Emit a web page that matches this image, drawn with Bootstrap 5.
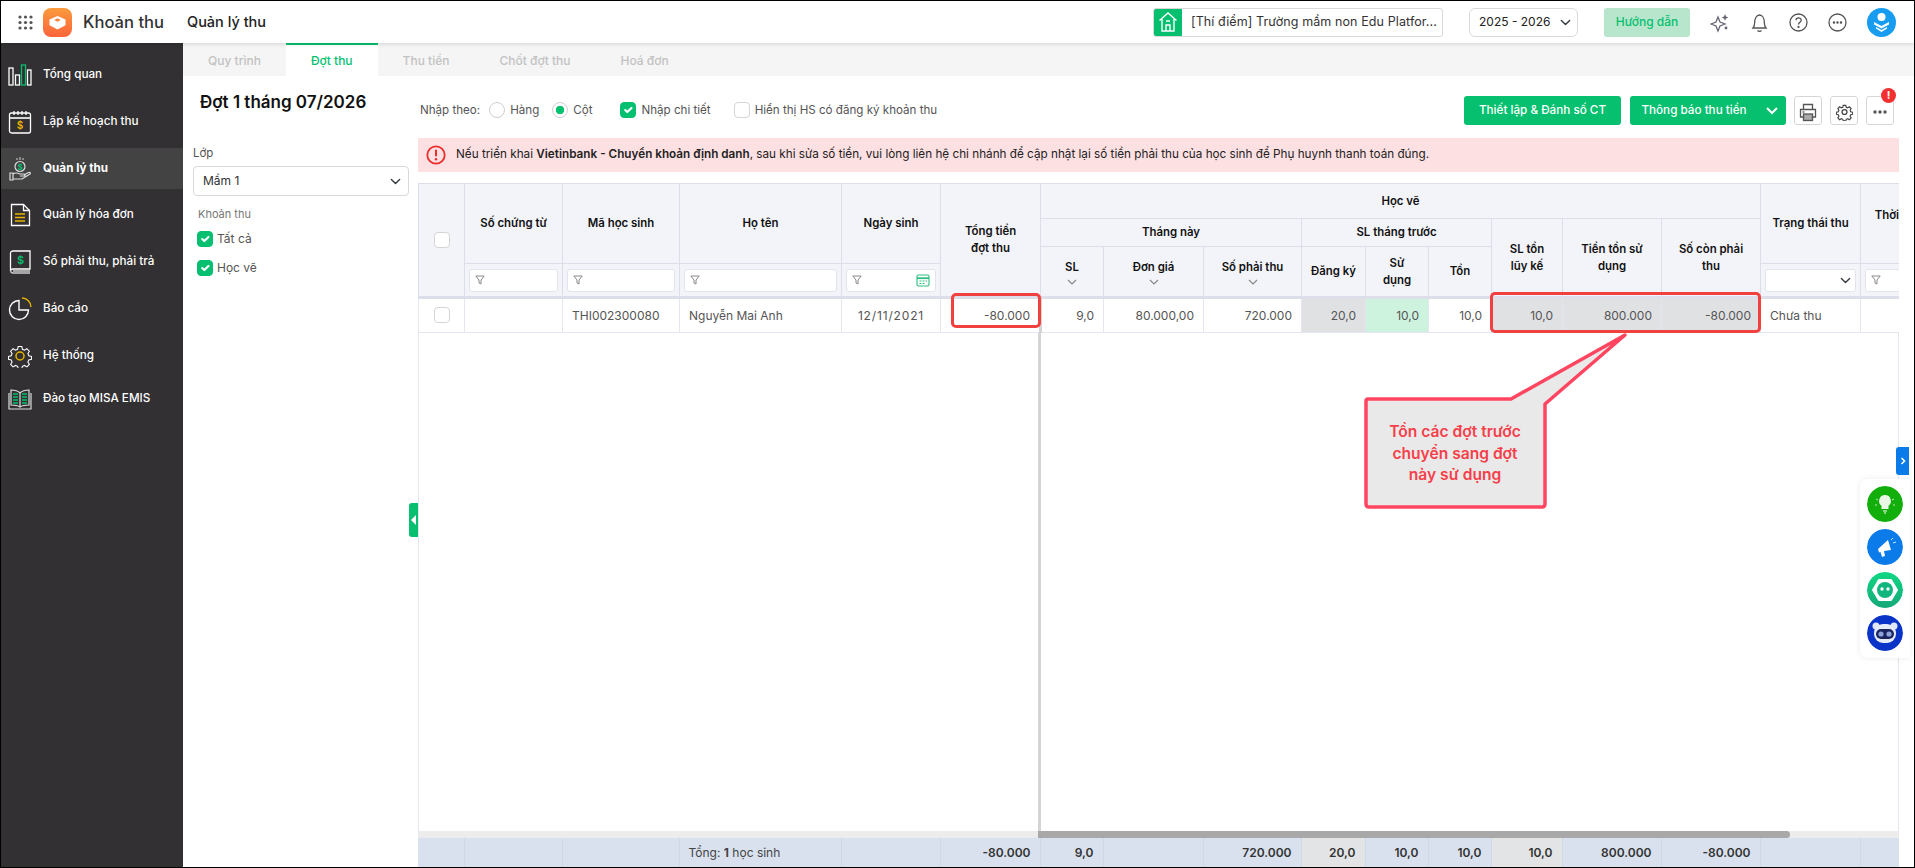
<!DOCTYPE html>
<html lang="vi">
<head>
    <meta charset="UTF-8">
    <title>Khoản thu - Quản lý thu</title>
    <link href="https://cdn.jsdelivr.net/npm/bootstrap@5.3.0/dist/css/bootstrap.min.css" rel="stylesheet">
    <style>
        html, body { height: 100%; overflow: hidden; }
        body { font-family: Inter, "Noto Sans", sans-serif; font-size: 12px; color: #222; background: #fff; }
        .app-frame { height: 868px; border: 1px solid #000; position: relative; overflow: hidden; }

        /* top bar */
        .top-bar { height: 42px; background: #fff; box-shadow: 0 1px 4px rgba(0,0,0,.14); position: relative; z-index: 3; padding-right: 18px; }
        .app-grid { margin-left: 17px; margin-right: 10px; }
        .app-name { font-size: 16.6px; font-weight: 500; color: #333; margin-left: 11px; width: 104px; }
        .page-name { font-size: 14.5px; font-weight: 500; color: #222; }
        .school-pick { width: 290px; height: 29px; border: 1px solid #d9d9d9; border-radius: 3px; overflow: hidden; font-size: 12.5px; color: #333; margin-right: 26px; }
        .school-icon { width: 28px; background: #06bf6f; }
        .school-text { padding-left: 9px; letter-spacing: .1px; white-space: nowrap; }
        .year-pick { width: 109px; height: 29px; font-size: 12px; padding: 0 0 0 9px; border-color: #d9d9d9; color: #222; margin-right: 26px; background-position: right 6px center; background-size: 11px; }
        .guide-btn { width: 86px; height: 29px; background: #b8e6cd; color: #06bf6f; border: 0; font-size: 12px; font-weight: 500; padding: 0; margin-right: 20px; border-radius: 3px; }
        .top-tools { gap: 18px; }
        .top-icon { width: 21px; height: 21px; display: block; }
        .user-dot { width: 29px; height: 29px; border-radius: 50%; background: #189cf0; margin-left: 1px; }

        /* sidebar */
        .side-nav { width: 182px; background: #323032; padding-top: 11.5px; gap: 5.75px; flex-shrink: 0; }
        .side-item { height: 41px; padding-left: 7px; gap: 11px; color: #fff; font-size: 11.7px; font-weight: 500; white-space: nowrap; }
        .side-item.on { background: #434343; font-weight: 700; }
        .side-item svg { width: 24px; height: 24px; flex-shrink: 0; }
        .side-last { margin-top: -3px; }

        /* tabs */
        .tab-strip { height: 33px; background: #f5f5f5; }
        .tab-link { padding: 0 25px; line-height: 31px; font-size: 12px; font-weight: 500; color: #c2c2c2; border-top: 2px solid transparent; white-space: nowrap; }
        .tab-link.on { background: #fff; color: #06bf6f; border-top-color: #06bf6f; }

        /* left filter panel */
        .filter-side { width: 235px; flex-shrink: 0; padding: 16px 9px 0 10px; position: relative; }
        .batch-title { font-size: 17px; font-weight: 600; color: #111; margin: 0 0 0 7px; line-height: 20px; }
        .class-label { margin-top: 33px; margin-bottom: 5px; color: #555; font-size: 11.5px; line-height: 16px; }
        .class-pick { height: 30px; font-size: 12px; padding: 0 0 0 9px; border-color: #d9d9d9; color: #333; border-radius: 4px; background-position: right 7px center; background-size: 11px; }
        .fee-label { margin: 10px 0 0 5px; line-height: 16px; color: #777; font-size: 11px; }
        .fee-row { margin: 7px 0 0 4px; gap: 4px; color: #555; font-size: 12px; height: 19px; }
        .fee-row + .fee-row { margin-top: 10px; }
        .fold-tab { position: absolute; right: 0; top: 427px; width: 9px; height: 34px; background: #06bf6f; border-radius: 3px 0 0 3px; }
        .fold-tab::after { content: ""; position: absolute; left: 2px; top: 12px; border: 5px solid transparent; border-left-width: 0; border-right: 5px solid #fff; }

        /* green checks */
        .form-check-input.green-box { width: 16px; height: 16px; margin: 0; border-radius: 4px; border-color: #d5d5d5; flex-shrink: 0; }
        .form-check-input.green-box:checked { background-color: #06bf6f; border-color: #06bf6f; }
        .form-check-input.green-dot { width: 16px; height: 16px; margin: 0; border-color: #cfcfcf; flex-shrink: 0; }
        .form-check-input.green-dot:checked { background-color: #fff; border-color: #cfcfcf; background-image: radial-gradient(circle, #06bf6f 0 4px, transparent 4.5px); }

        /* toolbar */
        .work-col { width: 1481px; flex-shrink: 0; }
        .tool-row { height: 29px; margin-top: 20px; padding: 0 5px 0 2px; color: #555; font-size: 11.6px; }
        .mode-label { margin-right: 9px; }
        .opt-item { gap: 5px; white-space: nowrap; }
        .opt-hang { margin-right: 13px; }
        .opt-cot { margin-right: 28px; }
        .opt-detail { margin-right: 23px; }
        .green-btn { height: 29px; background: #06bf6f; border: 0; color: #fff; font-size: 11.7px; font-weight: 500; padding: 0; border-radius: 3px; }
        .setup-btn { width: 157px; margin-right: 9px; }
        .notice-btn { width: 156px; margin-right: 8px; }
        .notice-btn span { width: 128px; }
        .notice-btn svg { margin-left: 8px; }
        .square-btn { width: 28px; height: 29px; padding: 0; border: 1px solid #d6d6d6; border-radius: 3px; background: #fff; margin-right: 8px; position: relative; }
        .square-btn:last-child { margin-right: 0; }
        .red-dot { position: absolute; top: -9px; right: -3px; width: 15px; height: 15px; border-radius: 50%; background: #f23030; color: #fff; font-size: 11px; font-weight: 700; line-height: 15px; text-align: center; }
        .warn-strip { height: 34px; margin-top: 13px; margin-bottom: 11px; background: #fde0e2; font-size: 11.72px; color: #222; padding-left: 8px; gap: 10px; white-space: nowrap; }
        .warn-strip b { font-weight: 600; }

        /* data table */
        .grid-wrap { overflow: hidden; min-height: 0; }
        .fee-table { table-layout: fixed; width: 1542px; border-collapse: collapse; }
        .fee-table th { background: #f3f4f9; border: 1px solid #dcdee9; padding: 0 3px; font-size: 11.4px; font-weight: 600; color: #111; text-align: center; vertical-align: middle; line-height: 17px; }
        .fee-table td { border: 1px solid #e4e5ee; padding: 0 9px; font-size: 12px; color: #555; vertical-align: middle; white-space: nowrap; overflow: hidden; }
        .hrow-a { height: 35px; }
        .hrow-b { height: 28px; }
        .hrow-c { height: 17px; }
        .hrow-d { height: 34px; }
        .body-row { height: 35px; }
        .body-row td { border-top: 3px solid #dcdee9; }
        .sort-caret { display: block; margin: 3px auto 0; }
        .fee-table th.flt-cell { padding: 0 4px; }
        .flt-box { height: 23px; background: #fff; border: 1px solid #e4e5ec; border-radius: 3px; padding: 0 5px; justify-content: space-between; }
        .flt-select { height: 23px; padding: 0; border-color: #e4e5ec; background-position: right 4px center; background-size: 11px; border-radius: 3px; }
        .num-cell { text-align: right; }
        .mid-cell { text-align: center; }
        .date-cell { letter-spacing: .85px; }
        .fee-table td.tone-grey { background: #e0e1e3; }
        .fee-table td.tone-green { background: #cdf3df; }
        .fee-table td.freeze-edge { border-right: 3px solid #d4d4d4; }
        .grid-rest { border-left: 1px solid #e4e5ee; border-right: 1px solid #e4e5ee; min-height: 0; }
        .rest-left { width: 622px; border-right: 3px solid #d4d4d4; }
        .h-track { height: 7px; background: #ececec; flex-shrink: 0; }
        .h-thumb { height: 7px; width: 752px; margin-left: 620px; background: #a8a8a8; border-radius: 0 4px 4px 0; }
        .sum-wrap { height: 29px; overflow: hidden; flex-shrink: 0; }
        .sum-table { table-layout: fixed; width: 1542px; border-collapse: collapse; height: 29px; }
        .sum-table td { background: #d9e1ee; border-right: 1px solid #cfd8e6; padding: 0 9px; font-size: 12px; font-weight: 600; color: #333; white-space: nowrap; overflow: hidden; }
        .sum-table td.sum-label { font-weight: 400; color: #444; }
        .sum-table td.sum-label b { font-weight: 700; }
        .sum-table td.tone-grey { background: #e3e4e6; }

        /* floating helpers */
        .help-dock { position: absolute; left: 1859px; top: 478px; width: 50px; height: 179px; background: #fff; border-radius: 8px 0 0 8px; box-shadow: 0 0 6px rgba(0,0,0,.08); gap: 7px; padding-left: 7px; justify-content: center; }
        .help-dot { width: 36px; height: 36px; border-radius: 50%; }
        .dock-tab { position: absolute; left: 1895px; top: 446px; width: 13px; height: 28px; background: #0a7be8; border-radius: 3px 0 0 3px; }

        /* annotations */
        .mark-box { position: absolute; border: 3px solid #f14040; border-radius: 5px; pointer-events: none; }
        .mark-total { left: 950px; top: 292px; width: 90px; height: 35px; }
        .mark-carry { left: 1489px; top: 291px; width: 271px; height: 41px; }
        .note-shape { position: absolute; left: 1355px; top: 322px; width: 280px; height: 195px; }
        .note-text { position: absolute; left: 1366px; top: 420px; width: 176px; text-align: center; color: #f5404a; font-size: 15.6px; font-weight: 600; line-height: 21.5px; }
    </style>
</head>
<body>
<div class="app-frame d-flex flex-column">
    <header class="top-bar d-flex align-items-center flex-shrink-0">
        <svg class="app-grid" width="15" height="15" viewBox="0 0 15 15" fill="#555"><circle cx="2" cy="2" r="1.6"/><circle cx="7.5" cy="2" r="1.6"/><circle cx="13" cy="2" r="1.6"/><circle cx="2" cy="7.5" r="1.6"/><circle cx="7.5" cy="7.5" r="1.6"/><circle cx="13" cy="7.5" r="1.6"/><circle cx="2" cy="13" r="1.6"/><circle cx="7.5" cy="13" r="1.6"/><circle cx="13" cy="13" r="1.6"/></svg>
        <svg width="29" height="29" viewBox="0 0 29 29"><defs><linearGradient id="logoFill" x1="0" y1="0" x2="0" y2="1"><stop offset="0" stop-color="#fb9a3c"/><stop offset="1" stop-color="#f9643b"/></linearGradient></defs><rect width="29" height="29" rx="8" fill="url(#logoFill)"/><path d="M14.5 8l8 3.6v5.6l-8 4.2-8-4.2v-5.6z" fill="#fff"/><path d="M14.5 10.2l3.4 1.8-3.4 1.8-3.4-1.8z" fill="#f9843b"/></svg>
        <div class="app-name">Khoản thu</div>
        <div class="page-name">Quản lý thu</div>
        <div class="ms-auto d-flex align-items-center">
            <div class="school-pick d-flex">
                <div class="school-icon d-flex align-items-center justify-content-center">
                    <svg width="20" height="22" viewBox="0 0 20 22" fill="none" stroke="#fff" stroke-width="1.4"><path d="M1.5 9.5L10 2l8.5 7.5M4 8v12h12V8M8 20v-6h4v6M8 10h4"/></svg>
                </div>
                <div class="school-text d-flex align-items-center">[Thí điểm] Trường mầm non Edu Platfor...</div>
            </div>
            <select class="form-select year-pick"><option>2025 - 2026</option></select>
            <button class="btn guide-btn">Hướng dẫn</button>
            <div class="d-flex align-items-center top-tools">
                <svg class="top-icon" viewBox="0 0 21 21" fill="#667"><path d="M8 5l2 5 5 2-5 2-2 5-2-5-5-2 5-2z" fill="none" stroke="#667" stroke-width="1.3"/><path d="M15 2l1 2.4 2.4 1-2.4 1-1 2.4-1-2.4-2.4-1 2.4-1z"/><circle cx="16" cy="16" r="1.4"/></svg>
                <svg class="top-icon" viewBox="0 0 21 21" fill="none" stroke="#555" stroke-width="1.3"><path d="M4 16c1.3-1.4 1.7-3 1.7-5.5C5.7 6.500 7.500 3 10.500 3s4.800 3.500 4.800 7.500c0 2.500.4 4.100 1.700 5.500z"/><path d="M8.500 18.500c1 1 3 1 4 0"/></svg>
                <svg class="top-icon" viewBox="0 0 21 21" fill="none" stroke="#555" stroke-width="1.3"><circle cx="10.500" cy="10.500" r="8.500"/><path d="M8 8.300c0-3.300 5.200-3.300 5.200-.1 0 2-2.700 2-2.700 4.300"/><circle cx="10.500" cy="15" r=".5"/></svg>
                <svg class="top-icon" viewBox="0 0 21 21" fill="none" stroke="#555" stroke-width="1.3"><circle cx="10.500" cy="10.500" r="8.500"/><circle cx="7" cy="10.500" r=".6"/><circle cx="10.500" cy="10.500" r=".6"/><circle cx="14" cy="10.500" r=".6"/></svg>
                <div class="user-dot d-flex align-items-center justify-content-center">
                    <svg width="19" height="20" viewBox="0 0 19 20" fill="#fff"><circle cx="9.500" cy="5" r="4"/><path d="M2 10l7.500 4 7.500-4v2.500l-7.500 4-7.500-4z"/><path d="M4 15l5.500 3 5.500-3v1.500L9.500 20 4 16.500z"/></svg>
                </div>
            </div>
        </div>
    </header>

    <div class="d-flex flex-grow-1" style="min-height:0">
        <nav class="side-nav d-flex flex-column">
            <div class="side-item d-flex align-items-center">
                <svg viewBox="0 0 24 24" fill="none" stroke="#fff" stroke-width="1.3"><rect x="1" y="5" width="4" height="17"/><rect x="7.500" y="12" width="4" height="10"/><rect x="13.500" y="2" width="4" height="20" stroke="#06bf6f"/><rect x="19.500" y="7" width="3.500" height="15"/></svg>
                <span>Tổng quan</span>
            </div>
            <div class="side-item d-flex align-items-center">
                <svg viewBox="0 0 24 24" fill="none" stroke="#fff" stroke-width="1.3"><rect x="1.500" y="3" width="21" height="20" rx="2"/><path d="M1.500 8h21" stroke-width="1.600"/><path d="M6 1v4M10 1v4M14 1v4M18 1v4"/><text x="12" y="19" text-anchor="middle" font-size="10" font-family="Inter" font-weight="600" fill="#e8b400" stroke="none">$</text></svg>
                <span>Lập kế hoạch thu</span>
            </div>
            <div class="side-item on d-flex align-items-center">
                <svg viewBox="0 0 24 24" fill="none" stroke="#ddd" stroke-width="1.200"><circle cx="12" cy="9.500" r="5"/><text x="12" y="12.500" text-anchor="middle" font-size="8" font-family="Inter" font-weight="700" fill="#06bf6f" stroke="none">$</text><path d="M12 0v3M9 1v2M15 1v2" stroke="#bbb"/><path d="M2 16h3v7H2zM5 17c3-2 5-1 7 0h4c1.500 0 1.500 2 0 2h-4M5 22h9l8-5c1-1 0-2-1.500-1.500L16 18"/></svg>
                <span>Quản lý thu</span>
            </div>
            <div class="side-item d-flex align-items-center">
                <svg viewBox="0 0 24 24" fill="none" stroke="#fff" stroke-width="1.300"><path d="M3.500 1.500h12l6 6v15h-18z"/><path d="M15.500 1.500v6h6"/><path d="M7 11h10M7 14.500h10M7 18h10" stroke="#e8b400" stroke-width="1.600"/></svg>
                <span>Quản lý hóa đơn</span>
            </div>
            <div class="side-item d-flex align-items-center">
                <svg viewBox="0 0 24 24" fill="none" stroke="#fff" stroke-width="1.300"><path d="M5 1h17v18H5c-1.500 0-2.500 1-2.500 2V3c0-1 1-2 2.500-2z"/><path d="M2.500 20c0 2 1 3 2.500 3h17M5 21h17" stroke="#ccc"/><text x="12.500" y="14" text-anchor="middle" font-size="11" font-family="Inter" font-weight="600" fill="#06bf6f" stroke="none">$</text></svg>
                <span>Sổ phải thu, phải trả</span>
            </div>
            <div class="side-item d-flex align-items-center">
                <svg viewBox="0 0 24 24" fill="none" stroke="#fff" stroke-width="1.400"><path d="M11 3.500a9.500 9.500 0 1 0 9.500 9.500H11z"/><path d="M14 1a9 9 0 0 1 9 9" stroke="#e8b400"/></svg>
                <span>Báo cáo</span>
            </div>
            <div class="side-item d-flex align-items-center">
                <svg viewBox="0 0 24 24" fill="none" stroke="#fff" stroke-width="1.200"><path d="M10 1.500h4l.7 3 2.300 1 2.700-1.600 2.700 2.800-1.600 2.600 1 2.400 3 .7v3.200l-3 .7-1 2.400 1.600 2.600-2.700 2.800-2.700-1.600-2.300 1-.7 2.400h-4l-.7-2.400-2.300-1-2.700 1.600-2.700-2.800 1.600-2.600-1-2.400-3-.7v-3.200l3-.7 1-2.400L1.600 6.700l2.700-2.800L7 5.500l2.300-1z" transform="translate(1.200 1.200) scale(.9)"/><circle cx="12" cy="12" r="4" stroke="#e8b400" stroke-width="1.500"/></svg>
                <span>Hệ thống</span>
            </div>
            <div class="side-item side-last d-flex align-items-center">
                <svg viewBox="0 0 24 24" fill="none" stroke="#ddd" stroke-width="1.200"><path d="M12 6c-2-2-5-3-9-3v15c4 0 7 .5 9 2 2-1.500 5-2 9-2V3c-4 0-7 1-9 3zM12 6v14"/><path d="M1 6v16h22V6"/><path d="M5 7h5M5 10h5M5 13h5M5 16h5M14 7h5M14 10h5M14 13h5M14 16h5" stroke="#06bf6f" stroke-width="1.500"/></svg>
                <span>Đào tạo MISA EMIS</span>
            </div>
        </nav>

        <div class="flex-grow-1 d-flex flex-column" style="min-width:0">
            <div class="tab-strip d-flex flex-shrink-0">
                <div class="tab-link">Quy trình</div>
                <div class="tab-link on">Đợt thu</div>
                <div class="tab-link">Thu tiền</div>
                <div class="tab-link">Chốt đợt thu</div>
                <div class="tab-link">Hoá đơn</div>
            </div>
            <div class="d-flex flex-grow-1" style="min-height:0">
                <aside class="filter-side">
                    <h1 class="batch-title">Đợt 1 tháng 07/2026</h1>
                    <div class="class-label">Lớp</div>
                    <select class="form-select class-pick"><option>Mầm 1</option></select>
                    <div class="fee-label">Khoản thu</div>
                    <label class="fee-row d-flex align-items-center"><input class="form-check-input green-box" type="checkbox" checked>Tất cả</label>
                    <label class="fee-row d-flex align-items-center"><input class="form-check-input green-box" type="checkbox" checked>Học vẽ</label>
                    <div class="fold-tab"></div>
                </aside>

                <main class="work-col d-flex flex-column">
                    <div class="tool-row d-flex align-items-center flex-shrink-0">
                        <span class="mode-label">Nhập theo:</span>
                        <label class="opt-item opt-hang d-flex align-items-center"><input class="form-check-input green-dot" type="radio" name="inputMode">Hàng</label>
                        <label class="opt-item opt-cot d-flex align-items-center"><input class="form-check-input green-dot" type="radio" name="inputMode" checked>Cột</label>
                        <label class="opt-item opt-detail d-flex align-items-center"><input class="form-check-input green-box" type="checkbox" checked>Nhập chi tiết</label>
                        <label class="opt-item d-flex align-items-center"><input class="form-check-input green-box" type="checkbox">Hiển thị HS có đăng ký khoản thu</label>
                        <div class="ms-auto d-flex align-items-center">
                            <button class="btn green-btn setup-btn">Thiết lập &amp; Đánh số CT</button>
                            <button class="btn green-btn notice-btn d-flex align-items-center"><span>Thông báo thu tiền</span>
                                <svg width="12" height="8" viewBox="0 0 12 8" fill="none" stroke="#fff" stroke-width="2"><path d="M1 1l5 5 5-5"/></svg>
                            </button>
                            <button class="btn square-btn"><svg width="18" height="19" viewBox="0 0 18 19" fill="none" stroke="#555" stroke-width="1.300"><path d="M4.500 6V1.500h9V6M4.500 14H1.500V6.500h15V14h-3"/><rect x="4.500" y="11" width="9" height="6.500" fill="#aaa"/><path d="M3.500 9h2"/></svg></button>
                            <button class="btn square-btn"><svg width="17" height="18" viewBox="0 0 24 24" fill="none" stroke="#444" stroke-width="1.800"><path d="M10 1.500h4l.7 3 2.300 1 2.700-1.600 2.700 2.800-1.600 2.600 1 2.400 3 .7v3.200l-3 .7-1 2.400 1.600 2.600-2.700 2.800-2.700-1.600-2.300 1-.7 2.400h-4l-.7-2.400-2.300-1-2.700 1.600-2.700-2.800 1.600-2.600-1-2.400-3-.7v-3.200l3-.7 1-2.400L1.600 6.700l2.700-2.800L7 5.500l2.300-1z" transform="translate(1.200 1.200) scale(.9)"/><circle cx="12" cy="12" r="3.500"/></svg></button>
                            <button class="btn square-btn"><svg width="14" height="4" viewBox="0 0 14 4" fill="#555"><circle cx="2" cy="2" r="1.700"/><circle cx="7" cy="2" r="1.700"/><circle cx="12" cy="2" r="1.700"/></svg><span class="red-dot">!</span></button>
                        </div>
                    </div>

                    <div class="warn-strip d-flex align-items-center flex-shrink-0">
                        <svg width="20" height="20" viewBox="0 0 20 20" fill="none"><circle cx="10" cy="10" r="8.700" stroke="#ee2b2b" stroke-width="1.800"/><path d="M10 4.800v6.400" stroke="#ee2b2b" stroke-width="2"/><circle cx="10" cy="14.300" r="1.200" fill="#ee2b2b"/></svg>
                        <span>Nếu triển khai <b>Vietinbank - Chuyển khoản định danh</b>, sau khi sửa số tiền, vui lòng liên hệ chi nhánh để cập nhật lại số tiền phải thu của học sinh để Phụ huynh thanh toán đúng.</span>
                    </div>

                    <div class="grid-wrap flex-grow-1 d-flex flex-column">
                        <table class="fee-table flex-shrink-0">
                            <colgroup><col width="46"><col width="98"><col width="117"><col width="162"><col width="99"><col width="100"><col width="63"><col width="100"><col width="98"><col width="64"><col width="63"><col width="63"><col width="71"><col width="99"><col width="99"><col width="100"><col width="100"></colgroup>
                            <thead>
                                <tr class="hrow-a">
                                    <th rowspan="4"><input class="form-check-input green-box" type="checkbox"></th>
                                    <th rowspan="3">Số chứng từ</th>
                                    <th rowspan="3">Mã học sinh</th>
                                    <th rowspan="3">Họ tên</th>
                                    <th rowspan="3">Ngày sinh</th>
                                    <th rowspan="4">Tổng tiền<br>đợt thu</th>
                                    <th colspan="9">Học vẽ</th>
                                    <th rowspan="3">Trạng thái thu</th>
                                    <th rowspan="3">Thời gian thu<br>tiền</th>
                                </tr>
                                <tr class="hrow-b">
                                    <th colspan="3">Tháng này</th>
                                    <th colspan="3">SL tháng trước</th>
                                    <th rowspan="3">SL tồn<br>lũy kế</th>
                                    <th rowspan="3">Tiền tồn sử<br>dụng</th>
                                    <th rowspan="3">Số còn phải<br>thu</th>
                                </tr>
                                <tr class="hrow-c">
                                    <th rowspan="2">SL<svg class="sort-caret" width="10" height="6" viewBox="0 0 10 6" fill="none" stroke="#888" stroke-width="1.200"><path d="M1 1l4 4 4-4"/></svg></th>
                                    <th rowspan="2">Đơn giá<svg class="sort-caret" width="10" height="6" viewBox="0 0 10 6" fill="none" stroke="#888" stroke-width="1.200"><path d="M1 1l4 4 4-4"/></svg></th>
                                    <th rowspan="2">Số phải thu<svg class="sort-caret" width="10" height="6" viewBox="0 0 10 6" fill="none" stroke="#888" stroke-width="1.200"><path d="M1 1l4 4 4-4"/></svg></th>
                                    <th rowspan="2">Đăng ký</th>
                                    <th rowspan="2">Sử<br>dụng</th>
                                    <th rowspan="2">Tồn</th>
                                </tr>
                                <tr class="hrow-d">
                                    <th class="flt-cell"><div class="flt-box d-flex align-items-center"><svg width="10" height="10" viewBox="0 0 10 10" fill="none" stroke="#888"><path d="M.8 1h8.400L6 5v4L4 8V5z"/></svg></div></th>
                                    <th class="flt-cell"><div class="flt-box d-flex align-items-center"><svg width="10" height="10" viewBox="0 0 10 10" fill="none" stroke="#888"><path d="M.8 1h8.400L6 5v4L4 8V5z"/></svg></div></th>
                                    <th class="flt-cell"><div class="flt-box d-flex align-items-center"><svg width="10" height="10" viewBox="0 0 10 10" fill="none" stroke="#888"><path d="M.8 1h8.400L6 5v4L4 8V5z"/></svg></div></th>
                                    <th class="flt-cell"><div class="flt-box d-flex align-items-center"><svg width="10" height="10" viewBox="0 0 10 10" fill="none" stroke="#888"><path d="M.8 1h8.400L6 5v4L4 8V5z"/></svg><svg width="14" height="14" viewBox="0 0 14 14" fill="none" stroke="#2cc080" stroke-width="1.100"><rect x="1" y="2" width="12" height="11" rx="1.500"/><path d="M1 5.200h12" stroke-width="1.800"/><path d="M3.500 8h2M6.500 8h2M9.500 8h1.500M3.500 10.500h2M6.500 10.500h2"/></svg></div></th>
                                    <th class="flt-cell"><select class="form-select flt-select"><option></option></select></th>
                                    <th class="flt-cell"><div class="flt-box d-flex align-items-center"><svg width="10" height="10" viewBox="0 0 10 10" fill="none" stroke="#888"><path d="M.8 1h8.400L6 5v4L4 8V5z"/></svg></div></th>
                                </tr>
                            </thead>
                            <tbody>
                                <tr class="body-row">
                                    <td class="mid-cell"><input class="form-check-input green-box" type="checkbox"></td>
                                    <td></td>
                                    <td>THI002300080</td>
                                    <td>Nguyễn Mai Anh</td>
                                    <td class="mid-cell date-cell">12/11/2021</td>
                                    <td class="num-cell freeze-edge">-80.000</td>
                                    <td class="num-cell">9,0</td>
                                    <td class="num-cell">80.000,00</td>
                                    <td class="num-cell">720.000</td>
                                    <td class="num-cell tone-grey">20,0</td>
                                    <td class="num-cell tone-green">10,0</td>
                                    <td class="num-cell">10,0</td>
                                    <td class="num-cell tone-grey">10,0</td>
                                    <td class="num-cell tone-grey">800.000</td>
                                    <td class="num-cell tone-grey">-80.000</td>
                                    <td>Chưa thu</td>
                                    <td></td>
                                </tr>
                            </tbody>
                        </table>
                        <div class="grid-rest flex-grow-1 d-flex"><div class="rest-left"></div></div>
                        <div class="h-track"><div class="h-thumb"></div></div>
                        <div class="sum-wrap">
                            <table class="sum-table">
                                <colgroup><col width="46"><col width="98"><col width="117"><col width="162"><col width="99"><col width="100"><col width="63"><col width="100"><col width="98"><col width="64"><col width="63"><col width="63"><col width="71"><col width="99"><col width="99"><col width="100"><col width="100"></colgroup>
                                <tr>
                                    <td></td><td></td><td></td>
                                    <td class="sum-label">Tổng: <b>1</b> học sinh</td>
                                    <td></td>
                                    <td class="num-cell">-80.000</td>
                                    <td class="num-cell">9,0</td>
                                    <td></td>
                                    <td class="num-cell">720.000</td>
                                    <td class="num-cell tone-grey">20,0</td>
                                    <td class="num-cell">10,0</td>
                                    <td class="num-cell">10,0</td>
                                    <td class="num-cell tone-grey">10,0</td>
                                    <td class="num-cell">800.000</td>
                                    <td class="num-cell">-80.000</td>
                                    <td></td><td></td>
                                </tr>
                            </table>
                        </div>
                    </div>
                </main>
            </div>
        </div>
    </div>

    <!-- floating help dock -->
    <div class="dock-tab d-flex align-items-center justify-content-center"><svg width="6" height="8" viewBox="0 0 6 8" fill="none" stroke="#fff" stroke-width="1.600"><path d="M1.500 1l3 3-3 3"/></svg></div>
    <div class="help-dock d-flex flex-column">
        <svg class="help-dot" viewBox="0 0 36 36"><circle cx="18" cy="18" r="18" fill="#12ae0c"/><path d="M18 9a6 6 0 0 0-3.500 10.800V23h7v-3.200A6 6 0 0 0 18 9z" fill="#eaf7e6"/><path d="M16 25h4M17 27h2" stroke="#fff" stroke-width="1.200"/><path d="M9 13l2 1M27 13l-2 1M8 19h2M26 19h2" stroke="#bfe8b8"/></svg>
        <svg class="help-dot" viewBox="0 0 36 36"><circle cx="18" cy="18" r="18" fill="#0a7be8"/><path d="M11 20l10-9 3 10-7 1 1 5-3 1-1.500-5-1.500.5z" fill="#fff"/><path d="M24 11l2-2M26 14l3-1" stroke="#cfe4ff"/></svg>
        <svg class="help-dot" viewBox="0 0 36 36"><defs><linearGradient id="botFill" x1="0" y1="0" x2="0" y2="1"><stop offset="0" stop-color="#10d884"/><stop offset="1" stop-color="#15a878"/></linearGradient></defs><circle cx="18" cy="18" r="18" fill="url(#botFill)"/><path d="M12 8h12l6 10-6 10H12L6 18z" fill="#fff" stroke="#fff" stroke-width="2" stroke-linejoin="round"/><circle cx="18" cy="18" r="8" fill="#13b57f"/><circle cx="15" cy="17" r="1.700" fill="#fff"/><circle cx="21" cy="17" r="1.700" fill="#fff"/></svg>
        <svg class="help-dot" viewBox="0 0 36 36"><circle cx="18" cy="18" r="18" fill="#0a34c8"/><circle cx="9" cy="11" r="3.500" fill="#dfe6fa"/><circle cx="27" cy="11" r="3.500" fill="#dfe6fa"/><rect x="7" y="9" width="22" height="19" rx="9" fill="#e6ebfa"/><rect x="9" y="14" width="18" height="10" rx="5" fill="#1a2560"/><circle cx="14" cy="19" r="2.600" fill="#8ea3d8"/><circle cx="22" cy="19" r="2.600" fill="#8ea3d8"/></svg>
    </div>

    <!-- annotations -->
    <div class="mark-box mark-total"></div>
    <div class="mark-box mark-carry"></div>
    <svg class="note-shape" viewBox="1355 322 280 195"><path d="M1367 398H1510L1624 334L1544 403V503Q1544 506 1541 506H1368Q1365 506 1365 503V400Q1365 398 1367 398Z" fill="#e9e9e9" stroke="#ff4560" stroke-width="3.500" stroke-linejoin="round"/></svg>
    <div class="note-text">Tồn các đợt trước<br>chuyển sang đợt<br>này sử dụng</div>
</div>
<script src="https://cdn.jsdelivr.net/npm/bootstrap@5.3.0/dist/js/bootstrap.bundle.min.js"></script>
</body>
</html>
